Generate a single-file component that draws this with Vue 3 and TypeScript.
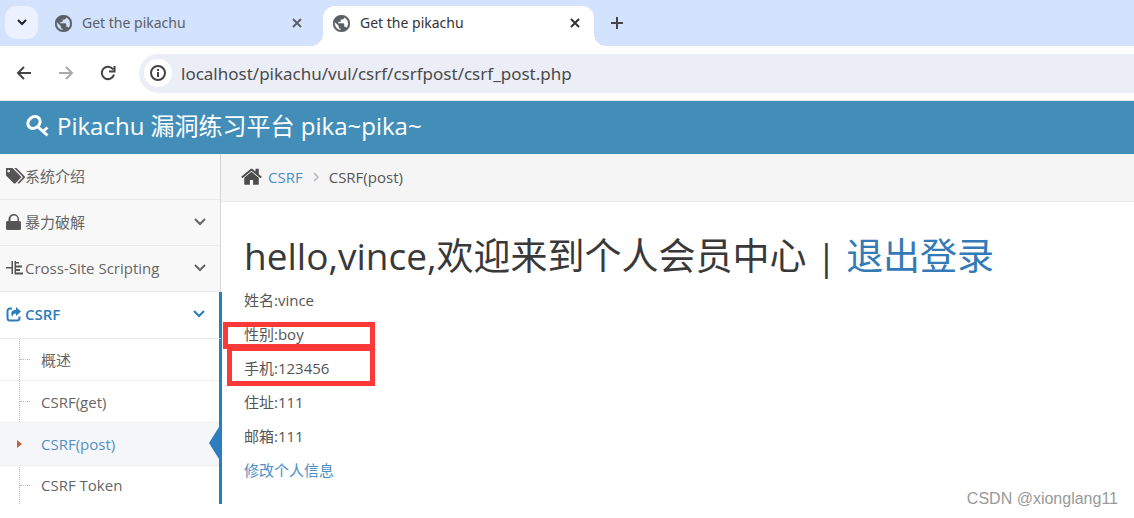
<script setup lang="ts">
import { ref } from 'vue'

interface MenuItem {
  label: string
  icon: string
  line?: string
  box: string
  expandable: boolean
  active?: boolean
}

const icons = {
  tags: 'M576 448q0-53-37.5-90.5t-90.5-37.5-90.5 37.5-37.5 90.5 37.5 90.5 90.5 37.5 90.5-37.5 37.5-90.5zm1067 576q0 53-37 90l-491 492q-39 37-91 37-53 0-90-37l-715-716q-38-37-64.5-101t-26.5-117v-416q0-52 38-90t90-38h416q53 0 117 26.5t102 64.5l715 714q37 39 37 91zm384 0q0 53-37 90l-491 492q-39 37-91 37-36 0-59-14t-53-45l470-470q37-37 37-90 0-52-37-91l-715-714q-38-38-102-64.5t-117-26.5h224q53 0 117 26.5t102 64.5l715 714q37 39 37 91z',
  lock: 'M4.500 7V5a3.500 3.500 0 0 1 7 0v2zM2.500 7H1.500Q0 7 0 8.500v6Q0 16 1.500 16h12q1.500 0 1.500-1.500v-6Q15 7 13.500 7h-.5V5a5.200 5 0 0 0-10.500 0z',
  indent: 'M0 6h5.500V0H7v13H5.500V7.500H0zM8.500 0H10v1h3v1.500h-3V4.500h6V6.500h-6v1.500h4v2h-4v1.500h7v2H8.500z',
  share: 'M10 0l5 4.500-5 4.500V6.500C7.500 6.500 6.500 7.500 6.500 10 4 6.500 5.500 2.800 10 2.800z',
  shareFrame: 'M6 1.500H4A2.500 2.500 0 0 0 1.500 4v7A2.500 2.500 0 0 0 4 13.500h7a2.500 2.500 0 0 0 2.500-2.500V9.500',
  globe: 'M12 2C6.48 2 2 6.48 2 12s4.48 10 10 10 10-4.48 10-10S17.52 2 12 2zm-1 17.93c-3.95-.49-7-3.85-7-7.93 0-.62.08-1.21.21-1.79L9 15v1c0 1.1.9 2 2 2v1.93zm6.9-2.54c-.26-.81-1-1.39-1.9-1.39h-1v-3c0-.55-.45-1-1-1H8v-2h2c.55 0 1-.45 1-1V7h2c1.1 0 2-.9 2-2v-.41c2.93 1.19 5 4.06 5 7.41 0 2.08-.8 3.97-2.1 5.39z',
}

const url = ref('localhost/pikachu/vul/csrf/csrfpost/csrf_post.php')

const tabs = [
  { title: 'Get the pikachu', active: false },
  { title: 'Get the pikachu', active: true },
]

const menu: MenuItem[] = [
  { label: '系统介绍', icon: icons.tags, box: '192 192 1835 1451', expandable: false },
  { label: '暴力破解', icon: icons.lock, box: '0 0 19 16', expandable: true },
  { label: 'Cross-Site Scripting', icon: icons.indent, box: '0 -1 19 16', expandable: true },
  { label: 'CSRF', icon: icons.share, line: icons.shareFrame, box: '0 -1 19 16', expandable: true, active: true },
]

const submenu = [
  { label: '概述', active: false },
  { label: 'CSRF(get)', active: false },
  { label: 'CSRF(post)', active: true },
  { label: 'CSRF Token', active: false },
]

const profile = [
  { name: '姓名', value: 'vince', mark: '' },
  { name: '性别', value: 'boy', mark: 'mark-short' },
  { name: '手机', value: '123456', mark: 'mark-tall' },
  { name: '住址', value: '111', mark: '' },
  { name: '邮箱', value: '111', mark: '' },
]
</script>

<template>
  <div class="window">
    <div class="tabstrip">
      <button class="tab-search" aria-label="Search tabs">
        <svg width="10" height="7" viewBox="0 0 10 7"><path d="M1 1l4 4 4-4" fill="none" stroke="#222" stroke-width="2" /></svg>
      </button>
      <div v-for="(tab, i) in tabs" :key="i" class="tab" :class="{ active: tab.active }">
        <svg class="globe" viewBox="2 2 20 20"><path :d="icons.globe" /></svg>
        <span class="tab-title">{{ tab.title }}</span>
        <button class="plain" aria-label="Close tab">
          <svg width="10" height="10" viewBox="0 0 10 10"><path d="M1 1l8 8M9 1l-8 8" fill="none" stroke="currentColor" stroke-width="2" /></svg>
        </button>
      </div>
      <button class="plain new-tab" aria-label="New tab">
        <svg width="12" height="12" viewBox="0 0 12 12"><path d="M6 0v12M0 6h12" fill="none" stroke="#444" stroke-width="2" /></svg>
      </button>
    </div>

    <div class="toolbar">
      <button class="plain nav" aria-label="Back">
        <svg width="16" height="14" viewBox="0 0 16 14"><path d="M15 7H2M8 1L2 7l6 6" fill="none" stroke="#444" stroke-width="2" /></svg>
      </button>
      <button class="plain nav" aria-label="Forward">
        <svg width="16" height="14" viewBox="0 0 16 14"><path d="M1 7h13M8 1l6 6-6 6" fill="none" stroke="#aaa" stroke-width="2" /></svg>
      </button>
      <button class="plain nav" aria-label="Reload">
        <svg width="16" height="16" viewBox="0 0 16 16"><path d="M13.200 4.500A6.200 6.200 0 1 0 14 9.500M14.500 1v5.500H9" fill="none" stroke="#444" stroke-width="2" /></svg>
      </button>
      <div class="omnibox">
        <button class="site-info" aria-label="Site information">
          <svg width="16" height="16" viewBox="0 0 16 16"><circle cx="8" cy="8" r="7" fill="none" stroke="#444" stroke-width="2" /><path d="M8 7v5M8 4v2" stroke="#444" stroke-width="2" /></svg>
        </button>
        <input v-model="url" class="url" type="text" aria-label="Address" />
      </div>
    </div>

    <header class="brand">
      <svg class="key" viewBox="0 0 24 22">
        <ellipse cx="8" cy="7.500" rx="6.500" ry="5.500" transform="rotate(-40 8 7.500)" />
        <path d="M11.500 11.500L21.500 20.500M17 16.500l4.500-4" />
      </svg>
      <span>Pikachu 漏洞练习平台 pika~pika~</span>
    </header>

    <div class="body">
      <nav class="sidebar">
        <a v-for="item in menu" :key="item.label" href="#" class="item" :class="{ active: item.active }">
          <svg class="item-icon" :viewBox="item.box">
            <path :d="item.icon" />
            <path v-if="item.line" :d="item.line" class="line" />
          </svg>
          <span class="item-label">{{ item.label }}</span>
          <svg v-if="item.expandable" width="12" height="8" viewBox="0 0 12 8"><path d="M1 1l5 5 5-5" fill="none" stroke="currentColor" stroke-width="2" /></svg>
        </a>
        <div class="submenu">
          <a v-for="item in submenu" :key="item.label" href="#" class="sub" :class="{ active: item.active }">
            <span class="branch"></span>
            <span>{{ item.label }}</span>
          </a>
        </div>
      </nav>

      <main class="main">
        <div class="crumbs">
          <svg class="home" viewBox="64 224 1664 1312"><path d="M1472 992v480q0 26-19 45t-45 19h-384v-384h-256v384h-384q-26 0-45-19t-19-45v-480q0-1 .5-3t.5-3l575-474 575 474q1 2 1 6zm223-69l-62 74q-8 9-21 11h-3q-13 0-21-7l-692-577-692 577q-12 8-24 7-13-2-21-11l-62-74q-8-10-7-23.500t11-21.500l719-599q32-26 76-26t76 26l244 204v-195q0-14 9-23t23-9h192q14 0 23 9t9 23v408l219 182q10 8 11 21.500t-7 23.500z" /></svg>
          <a href="#">CSRF</a>
          <svg class="sep" width="6" height="10" viewBox="0 0 6 10"><path d="M1 1l4 4-4 4" fill="none" stroke="#b2b6bf" stroke-width="1.500" /></svg>
          <span>CSRF(post)</span>
        </div>
        <div class="content">
          <h1>hello,vince,欢迎来到个人会员中心 | <a href="#">退出登录</a></h1>
          <p v-for="row in profile" :key="row.name" class="row">
            {{ row.name }}:{{ row.value }}
            <span v-if="row.mark" class="mark" :class="row.mark"></span>
          </p>
          <p class="row"><a href="#">修改个人信息</a></p>
        </div>
      </main>
    </div>
    <footer class="credit">CSDN @xionglang11</footer>
  </div>
</template>

<style>
body {
  margin: 0;
  background: #fff;
}
</style>

<style scoped>
.window {
  position: relative;
  padding-bottom: 13px;
  font: 15px/24px "Open Sans", "Noto Sans CJK SC", sans-serif;
  color: #555;
  background: #fff;
}

.window * {
  box-sizing: border-box;
}

a {
  color: #4c8fc7;
  text-decoration: none;
}

.plain {
  display: flex;
  align-items: center;
  justify-content: center;
  padding: 0;
  border: 0;
  background: none;
  color: inherit;
}

.tabstrip {
  display: flex;
  height: 46px;
  padding: 6px 5px 0;
  background: #d3e2fd;
}

.tab-search {
  display: flex;
  align-items: center;
  justify-content: center;
  width: 33px;
  height: 33px;
  padding: 0;
  border: 0;
  border-radius: 11px;
  background: #ebf1fe;
}

.tab {
  position: relative;
  display: flex;
  align-items: center;
  width: 271px;
  margin-left: 7px;
  padding: 0 14px 6px 10px;
  font-family: "Noto Sans", "Open Sans", sans-serif;
  font-size: 14px;
  color: #5c6068;
}

.tab.active {
  border-radius: 12px 12px 0 0;
  background: #fff;
  color: #333;
}

.tab.active::before,
.tab.active::after {
  position: absolute;
  bottom: 0;
  width: 12px;
  height: 12px;
  content: "";
}

.tab.active::before {
  right: 100%;
  background: radial-gradient(circle at 0 0, #d3e2fd 12px, #fff 12px);
}

.tab.active::after {
  left: 100%;
  background: radial-gradient(circle at 100% 0, #d3e2fd 12px, #fff 12px);
}

.globe {
  width: 17px;
  height: 17px;
  margin-right: 10px;
  fill: #5b6065;
  stroke: #5b6065;
  stroke-width: 0.5;
}

.tab-title {
  flex: 1;
}

.new-tab {
  width: 46px;
  height: 33px;
}

.toolbar {
  display: flex;
  align-items: center;
  height: 55px;
  padding-left: 3px;
  border-bottom: 1px solid #e6e8ec;
}

.nav {
  width: 42px;
  height: 40px;
}

.omnibox {
  display: flex;
  flex: 1;
  align-items: center;
  height: 39px;
  margin-left: 10px;
  padding-left: 5px;
  border-radius: 20px 0 0 20px;
  background: #ebeef7;
}

.site-info {
  display: flex;
  align-items: center;
  justify-content: center;
  width: 28px;
  height: 28px;
  padding: 0;
  border: 0;
  border-radius: 50%;
  background: #fff;
}

.url {
  flex: 1;
  min-width: 0;
  height: 30px;
  padding: 0 9px;
  border: 0;
  outline: 0;
  background: none;
  font: 17px "Noto Sans", "Open Sans", sans-serif;
  color: #4a4a4a;
}

.brand {
  display: flex;
  align-items: center;
  height: 53px;
  padding: 0 0 3px 26px;
  background: #438eb9;
  color: #fff;
  font-size: 24px;
}

.key {
  width: 24px;
  height: 22px;
  margin-right: 7px;
  fill: none;
  stroke: #fff;
  stroke-width: 3;
}

.body {
  display: flex;
}

.sidebar {
  width: 221px;
  border-right: 1px solid #d6d6d6;
  background: #f8f8f8;
}

.item {
  display: flex;
  align-items: center;
  height: 46px;
  padding: 0 14px 2px 6px;
  border-bottom: 1px solid #e9e9e9;
  color: #666;
}

.item.active {
  height: 47px;
  background: #fff;
  color: #2b7dbc;
  font-weight: 600;
}

.item-icon {
  width: 19px;
  height: 16px;
  fill: #555;
}

.item.active .item-icon {
  fill: #2b7dbc;
}

.item-icon .line {
  fill: none;
  stroke: #2b7dbc;
  stroke-width: 2;
}

.item-label {
  flex: 1;
}

.item.active,
.submenu {
  position: relative;
  margin-right: -2px;
  border-right: 3px solid #2b7dbc;
}

.submenu {
  background: #fff;
}

.submenu::before {
  position: absolute;
  top: 0;
  bottom: 0;
  left: 19px;
  border-left: 1px dotted #9dbdd6;
  content: "";
}

.sub {
  position: relative;
  display: flex;
  align-items: center;
  height: 42px;
  padding-left: 20px;
  border-bottom: 1px dotted #e4e4e4;
  color: #666;
}

.sub:last-child {
  height: 38px;
  border-bottom: 0;
}

.branch {
  width: 10px;
  margin-right: 11px;
  border-top: 1px dotted #9dbdd6;
}

.sub.active {
  height: 43px;
  background: #f4f6fa;
  color: #5590c4;
}

.sub.active .branch {
  position: relative;
  border-top-color: transparent;
}

.sub.active .branch::before {
  position: absolute;
  top: -5px;
  left: -3px;
  border: 4px solid transparent;
  border-left: 5px solid #c86139;
  content: "";
}

.sub.active::after {
  position: absolute;
  top: 4px;
  right: 0;
  border: 16px solid transparent;
  border-right: 10px solid #2b7dbc;
  border-left: 0;
  content: "";
}

.main {
  flex: 1;
  min-width: 0;
}

.crumbs {
  display: flex;
  align-items: center;
  height: 48px;
  padding: 0 20px 2px;
  border-bottom: 1px solid #e9e9e9;
  background: #f5f5f5;
}

.home {
  width: 21px;
  height: 17px;
  margin-right: 6px;
  fill: #4c4c4c;
}

.sep {
  margin: 0 10px;
}

.content {
  padding: 27px 23px 0;
}

h1 {
  margin: 0 0 5px;
  font-size: 37px;
  font-weight: 400;
  line-height: 54px;
  color: #393939;
}

h1 a {
  color: #337ab7;
}

.row {
  position: relative;
  margin: 0 0 10px;
}

.row:last-child {
  margin: 0;
}

.mark {
  position: absolute;
  border: 5px solid #fc3838;
}

.mark-short {
  top: 0;
  left: -21px;
  width: 152px;
  height: 27px;
}

.mark-tall {
  top: -10px;
  left: -17px;
  width: 148px;
  height: 40px;
}

.credit {
  position: absolute;
  right: 16px;
  bottom: 6px;
  font: 16px/24px "Liberation Sans", sans-serif;
  color: #999;
}
</style>
